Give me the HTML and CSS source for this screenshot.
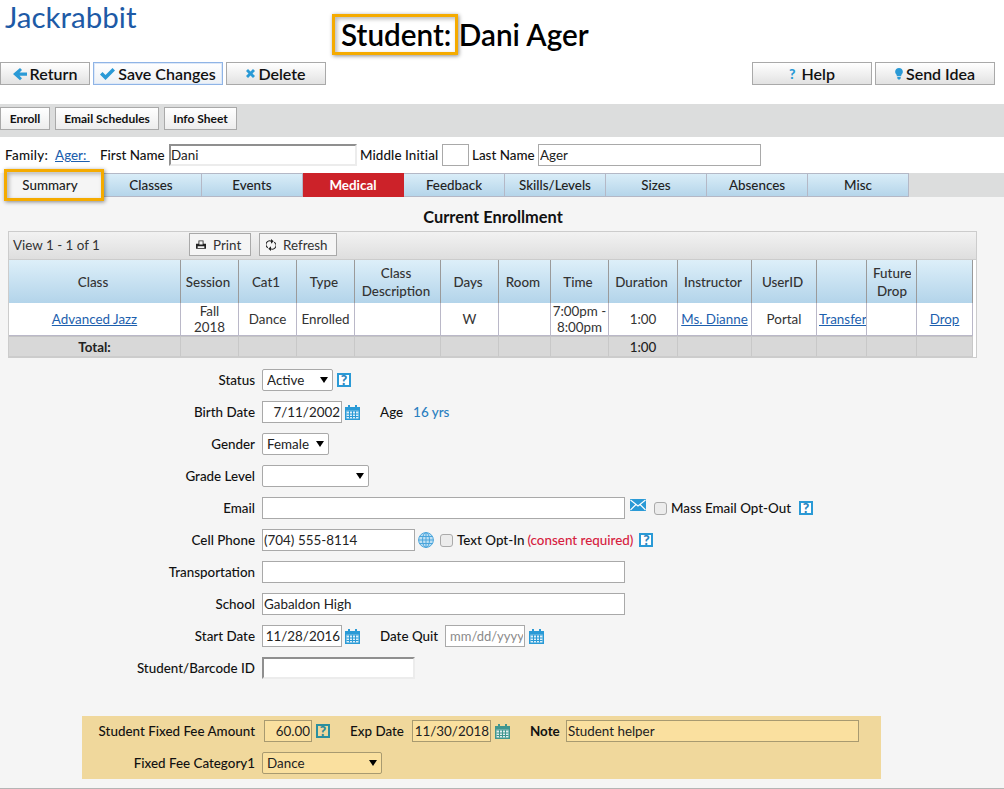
FILE: index.html
```html
<!DOCTYPE html>
<html lang="en">
<head>
<meta charset="utf-8">
<title>Student: Dani Ager</title>
<link rel="stylesheet" href="styles.css">
</head>
<body>
<svg class="defs" width="0" height="0" aria-hidden="true">
  <symbol id="cal" viewBox="0 0 15 15"><path fill="currentColor" d="M3 0h2v2h5V0h2v2h3v13H0V2h3z"/><path fill="#fff" opacity=".85" d="M1.5 5.5h12v8h-12z"/><path fill="currentColor" d="M1.5 5.500h12v1h-12zM1.500 8.500h12v1h-12zM1.500 11h12v1h-12zM4 5.500h1v8H4zM7 5.500h1v8H7zM10 5.500h1v8h-1z"/></symbol>
</svg>
<div class="page">
  <header class="top">
    <div class="logo">Jackrabbit</div>
    <h1 class="title">Student: Dani Ager</h1>
  </header>
  <div class="actions">
    <button class="btn"><svg class="ic" width="14" height="14" viewBox="0 0 14 14"><path fill="#2a9ad6" d="M7 1l2 2-2.500 2.500H14v3.200H6.500L9 11.200l-2 2L0 7.100z"/></svg>Return</button>
    <button class="btn btn-save"><svg class="ic" width="15" height="12" viewBox="0 0 15 12"><path fill="#2a9ad6" d="M0 6.500l2.500-2.500 3 3L12.500 0 15 2.500 5.500 12z"/></svg>Save Changes</button>
    <button class="btn btn-del"><svg class="ic ic-x" width="9" height="9" viewBox="0 0 9 9"><path fill="#2a9ad6" d="M2 0l2.500 2.500L7 0l2 2-2.500 2.500L9 7 7 9 4.500 6.500 2 9 0 7l2.500-2.500L0 2z"/></svg>Delete</button>
    <div class="actions-right">
      <button class="btn btn-wide"><span class="q">?</span>Help</button>
      <button class="btn btn-wide"><svg class="ic ic-bulb" width="8" height="12" viewBox="0 0 9 14"><path fill="#2a9ad6" d="M4.500 0C7 0 9 1.800 9 4.300c0 1.700-1 2.700-1.700 3.700L7 9.500H2L1.700 8C1 7 0 6 0 4.300 0 1.800 2 0 4.500 0zM2.500 10.500h4v1.500l-1 1.500h-2l-1-1.500z"/></svg>Send Idea</button>
    </div>
  </div>
  <div class="subbar">
    <button class="btn-sm b-enroll">Enroll</button>
    <button class="btn-sm b-email">Email Schedules</button>
    <button class="btn-sm b-info">Info Sheet</button>
  </div>
  <div class="names">
    <span class="lbl fam-l">Family:</span>
    <a class="link fam" href="#">Ager: </a>
    <span class="lbl first">First Name</span>
    <input class="inp inset w-first" type="text" value="Dani">
    <span class="lbl mid">Middle Initial</span>
    <input class="inp w-mi" type="text">
    <span class="lbl last">Last Name</span>
    <input class="inp w-last" type="text" value="Ager">
  </div>
  <nav class="tabs">
    <a class="tab tab-on">Summary</a>
    <a class="tab">Classes</a>
    <a class="tab">Events</a>
    <a class="tab tab-red">Medical</a>
    <a class="tab">Feedback</a>
    <a class="tab">Skills/Levels</a>
    <a class="tab">Sizes</a>
    <a class="tab">Absences</a>
    <a class="tab">Misc</a>
  </nav>
  <main class="main">
    <h2 class="heading">Current Enrollment</h2>
    <section class="grid">
      <div class="grid-tools">
        <span class="view">View 1 - 1 of 1</span>
        <button class="tool tool-print"><svg class="tool-ic" width="10" height="10" viewBox="0 0 12 11"><path fill="#222" d="M3 0h6v4h3v6H0V4h3zM4 1v4h4V1zM2 7v2h8V7z"/></svg>Print</button>
        <button class="tool tool-refresh"><svg class="tool-ic" width="10" height="12" viewBox="0 0 11 13" fill="none" stroke="#222" stroke-width="1.200"><path d="M2 9.500A4 4 0 0 1 6 2.500M9 3.500a4 4 0 0 1-4 7"/><path fill="#222" stroke="none" d="M5.500 0L8.500 2.500 5.500 5zM5.500 8L2.500 10.500 5.500 13z"/></svg>Refresh</button>
      </div>
      <table class="tbl">
        <colgroup>
          <col class="c1"><col class="c2"><col class="c2"><col class="c2"><col class="c5"><col class="c2"><col class="c7"><col class="c2"><col class="c9"><col class="c10"><col class="c11"><col class="c12"><col class="c12"><col class="c14">
        </colgroup>
        <thead>
          <tr>
            <th>Class</th><th>Session</th><th>Cat1</th><th>Type</th><th>Class Description</th><th>Days</th><th>Room</th><th>Time</th><th>Duration</th><th>Instructor</th><th>UserID</th><th></th><th><span class="clip">Future Drop</span></th><th></th>
          </tr>
        </thead>
        <tbody>
          <tr>
            <td><a class="link" href="#">Advanced Jazz</a></td><td class="td-session">Fall 2018</td><td>Dance</td><td>Enrolled</td><td></td><td>W</td><td></td><td>7:00pm - 8:00pm</td><td>1:00</td><td><a class="link" href="#">Ms. Dianne</a></td><td>Portal</td><td class="td-clip"><a class="link" href="#">Transfer</a></td><td></td><td><a class="link" href="#">Drop</a></td>
          </tr>
        </tbody>
        <tfoot>
          <tr>
            <td class="total">Total:</td><td></td><td></td><td></td><td></td><td></td><td></td><td></td><td>1:00</td><td></td><td></td><td></td><td></td><td></td>
          </tr>
        </tfoot>
      </table>
    </section>

    <form class="form">
      <div class="row"><label class="rl">Status</label><span class="sel w-status"><select><option>Active</option></select></span><span class="help ml4">?</span></div>
      <div class="row"><label class="rl">Birth Date</label><input class="inp date" type="text" value="7/11/2002"><svg class="cal" width="15" height="15"><use href="#cal"/></svg><span class="lbl gap-age">Age</span><span class="age">16 yrs</span></div>
      <div class="row"><label class="rl">Gender</label><span class="sel w-gender"><select><option>Female</option></select></span></div>
      <div class="row"><label class="rl">Grade Level</label><span class="sel w-grade"><select><option></option></select></span></div>
      <div class="row"><label class="rl">Email</label><input class="inp w-long" type="text">
        <svg class="mail" width="16" height="12" viewBox="0 0 16 12"><path fill="#2a9ad6" d="M0 0h16v12H0z"/><path fill="none" stroke="#fff" stroke-width="1.100" d="M0.500 1l7.500 6 7.500-6M0.500 11l5.500-5.500M15.500 11l-5.500-5.500"/></svg>
        <input class="chk chk-mail" type="checkbox"><span class="lbl chk-text">Mass Email Opt-Out</span><span class="help ml8">?</span></div>
      <div class="row"><label class="rl">Cell Phone</label><input class="inp w-mid" type="text" value="(704) 555-8114">
        <svg class="globe" width="16" height="16" viewBox="0 0 16 16" fill="none" stroke="#4aa5dc" stroke-width="1"><circle cx="8" cy="8" r="7.400" fill="#bfe0f3"/><ellipse cx="8" cy="8" rx="3.500" ry="7.400"/><path d="M8 .6v14.800M.6 8h14.800M1.700 4.500h12.600M1.700 11.500h12.600"/></svg>
        <input class="chk chk-sms" type="checkbox"><span class="lbl chk-text">Text Opt-In</span><span class="consent">(consent required)</span><span class="help ml6">?</span></div>
      <div class="row"><label class="rl">Transportation</label><input class="inp w-long" type="text"></div>
      <div class="row"><label class="rl">School</label><input class="inp w-long" type="text" value="Gabaldon High"></div>
      <div class="row"><label class="rl">Start Date</label><input class="inp date" type="text" value="11/28/2016"><svg class="cal" width="15" height="15"><use href="#cal"/></svg><span class="lbl gap-age quit-l">Date Quit</span><input class="inp date ph" type="text" placeholder="mm/dd/yyyy"><svg class="cal cal-quit" width="15" height="15"><use href="#cal"/></svg></div>
      <div class="row"><label class="rl">Student/Barcode ID</label><input class="inp inset w-mid" type="text"></div>
    </form>

    <section class="fee">
      <div class="row row-fee1"><label class="rl fee-l">Student Fixed Fee Amount</label><input class="inp fee-i fee-amt" type="text" value="60.00"><span class="help ml4 help-fee">?</span><span class="lbl fee-exp">Exp Date</span><input class="inp fee-i date fee-date" type="text" value="11/30/2018"><svg class="cal cal-fee" width="15" height="15"><use href="#cal"/></svg><span class="lbl fee-note">Note</span><input class="inp fee-i fee-text" type="text" value="Student helper"></div>
      <div class="row"><label class="rl fee-l fee-l2">Fixed Fee Category1</label><span class="sel sel-fee w-cat"><select><option>Dance</option></select></span></div>
    </section>
  </main>
  <div class="mark mark-title"></div>
  <div class="mark mark-tab"></div>
</div>
</body>
</html>
```
FILE: styles.css
```css
* { box-sizing: border-box; }
html, body { margin: 0; padding: 0; }
body { font-family: Lato, "Open Sans", sans-serif; font-size: 13.400px; color: #111; background: #fff; overflow: hidden; }
.defs { position: absolute; }
.page { position: relative; width: 1004px; height: 789px; overflow: hidden; }

.top { display: flex; height: 62px; }
.logo { width: 341px; height: 34px; padding: 1px 0 0 5px; font-size: 29.500px; line-height: 32px; font-weight: 400; color: #1d5aa6; }
.title { margin: 17px 0 0; font-size: 29.700px; line-height: 36px; font-weight: 600; color: #000; }

.actions { display: flex; gap: 3px; height: 23px; }
.actions-right { display: flex; gap: 3px; margin-left: auto; padding-right: 9px; }
.btn { display: flex; align-items: center; justify-content: center; width: 90px; height: 23px; padding: 0; border: 1px solid #a9a9a9; background: linear-gradient(#fff, #e2e2e2); font: 600 16px/21px Lato, sans-serif; color: #111; }
.btn-save { width: 130px; border-color: #8fb4e6; background: linear-gradient(#fff, #ecf0f5); box-shadow: inset 0 0 0 1px #dce8f8; }
.btn-del { width: 100px; }
.btn-wide { width: 120px; }
.ic { margin-right: 3px; }
.ic-x { margin-right: 3px; }
.ic-bulb { margin-right: 3px; }
.q { margin-right: 6px; color: #2a9ad6; font-weight: 900; font-size: 14px; }

.subbar { display: flex; gap: 5px; height: 33px; margin-top: 19px; padding-top: 3px; background: #dcdddd; }
.btn-sm { height: 23px; padding: 0; border: 1px solid #a9a9a9; background: linear-gradient(#fff, #ededed); font: 700 12px/20px Lato, sans-serif; color: #111; }
.b-enroll { width: 50px; }
.b-email { width: 104px; }
.b-info { width: 73px; }

.names { display: flex; align-items: center; height: 36px; padding: 0 0 0 5px; }
.lbl { font-weight: 500; white-space: nowrap; color: #111; }
.link { color: #1d5fae; text-decoration: underline; }
.fam-l { width: 44px; letter-spacing: .3px; }
.fam { width: 33px; margin-left: 6px; font-weight: 500; white-space: pre; }
.first { width: 65px; margin-left: 12px; margin-right: 4px; }
.mid { width: 79px; margin-left: 3px; margin-right: 3px; letter-spacing: .1px; }
.last { width: 62px; margin-left: 3px; margin-right: 4px; }

.inp { height: 22px; padding: 0 1px; border: 1px solid #a9a9a9; background: #fff; font: 400 13.400px/20px Lato, sans-serif; color: #222; outline: 0; border-radius: 0; }
.inset { border-style: solid; border-width: 2px; border-color: #8f8f8f #ececec #ececec #8f8f8f; padding: 0; }
.w-first { width: 188px; }
.w-mi { width: 27px; }
.w-last { width: 223px; }
.w-long { width: 363px; }
.w-mid { width: 153px; }

.tabs { display: flex; height: 24px; background: #dcdddd; }
.tab { width: 101px; height: 24px; border: 1px solid #b4b8c6; border-left: 0; background: linear-gradient(#d9edf8, #b5d5ea); text-align: center; font-weight: 500; line-height: 22px; color: #222; }
.tab-on { background: #f5f5f5; border-color: #f5f5f5; }
.tab-red { background: #cc2229; color: #fff; font-weight: 700; border-color: #cc2229; }

.main { height: 592px; background: #f5f5f5; border-bottom: 1px solid #b5b5b5; }
.heading { margin: 0; height: 34px; padding-right: 18px; text-align: center; font-size: 16.400px; line-height: 40px; font-weight: 700; color: #111; }

.grid { width: 969px; margin-left: 8px; border: 1px solid #ccc; background: #fff; height: 127px; }
.grid-tools { display: flex; align-items: center; height: 28px; padding: 0 0 2px 4px; border-bottom: 1px solid #ccc; background: linear-gradient(#f2f2f2, #dedede); }
.view { width: 176px; color: #333; }
.tool { display: flex; align-items: center; height: 23px; padding: 0; border: 1px solid #a9a9a9; background: #f5f5f5; font: 400 13.400px/20px Lato, sans-serif; color: #333; }
.tool-print { width: 62px; padding-left: 6px; margin-right: 8px; }
.tool-refresh { width: 78px; padding-left: 6px; }
.tool-ic { margin-right: 7px; }

.tbl { table-layout: fixed; width: 964px; border-collapse: separate; border-spacing: 0; }
.c1 { width: 172px; }
.c2 { width: 58px; }
.c5 { width: 86px; }
.c7 { width: 52px; }
.c9 { width: 69px; }
.c10 { width: 74px; }
.c11 { width: 65px; }
.c12 { width: 50px; }
.c14 { width: 56px; }
.tbl th, .tbl td { padding: 0 1px; text-align: center; overflow: hidden; }
.tbl th { height: 43px; padding: 0 3px 0 0; background: linear-gradient(#ddeff9, #b3d4ea); border-right: 1px solid #9a9a9a; font-weight: 500; line-height: 18px; color: #333; }
.tbl tbody td { height: 33px; background: #fff; border-right: 1px solid #bab8c8; border-bottom: 1px solid #bab8c8; line-height: 16px; color: #333; }
.tbl tbody td.td-session { padding: 0 8px; }
.tbl tfoot td { height: 21px; background: #d8d8d8; border-top: 1px solid #c4c4c4; border-right: 1px solid #c8c8c8; font-weight: 500; color: #222; border-bottom: 1px solid #ccc; }
.tbl tfoot td.total { font-weight: 700; }
.clip { display: block; width: 38px; margin-left: 6px; overflow: hidden; }
.tbl tbody td.td-clip { white-space: nowrap; text-align: left; padding: 0 0 0 2px; }

.form { margin-top: 6px; }
.row { display: flex; align-items: center; height: 32px; }
.rl { width: 255px; margin-right: 7px; text-align: right; font-weight: 500; color: #111; white-space: nowrap; }

.sel { position: relative; display: block; height: 22px; }
.sel select { appearance: none; display: block; width: 100%; height: 22px; padding: 0 0 0 4px; border: 1px solid #a9a9a9; border-radius: 2px; background: #fff; font: 400 13.400px/20px Lato, sans-serif; color: #222; }
.sel::after { content: ""; position: absolute; right: 5px; top: 8px; border: 4px solid transparent; border-top: 6px solid #000; border-bottom: 0; }
.w-status { width: 71px; }
.w-gender { width: 67px; }
.w-grade { width: 107px; }
.w-cat { width: 120px; }

.help { display: block; width: 14px; height: 14px; border: 2px solid #2a9ad6; background: #fff; text-align: center; font-weight: 900; font-size: 14px; line-height: 10px; color: #2a86bf; }
.ml4 { margin-left: 4px; }
.ml6 { margin-left: 6px; }
.ml8 { margin-left: 8px; }

.date { width: 80px; text-align: right; }
.ph { text-align: left; padding-left: 4px; font-size: 13px; }
.ph::placeholder { color: #8a8a8a; opacity: 1; }
.cal { margin-left: 3px; color: #2a9ad6; }
.cal-quit { margin-left: 4px; }
.gap-age { margin-left: 20px; }
.age { margin-left: 10px; font-weight: 500; color: #2a7fc0; }
.quit-l { width: 65px; }
.mail { margin-left: 5px; margin-top: -6px; }
.globe { margin-left: 3px; }
.chk { appearance: none; width: 13px; height: 13px; margin: 0; border: 1px solid #aaa; border-radius: 3px; background: #ececec; }
.chk-mail { margin-left: 8px; }
.chk-sms { margin-left: 6px; }
.chk-text { margin-left: 4px; }
.consent { margin-left: 3px; font-weight: 500; color: #d6203e; }

.fee { width: 799px; height: 63px; margin: 32px 0 0 82px; background: #f0d89c; }
.row-fee1 { height: 30px; margin-bottom: 1px; }
.fee-l { width: 173px; margin-right: 9px; }
.fee-l2 { margin-right: 7px; }
.fee-i { background: #fae09f; border-color: #a89a70; }
.fee-amt { width: 48px; text-align: right; }
.help-fee { background: #f0d89c; color: #2a8a9a; border-color: #2a8f9f; }
.fee-exp { width: 62px; margin-left: 20px; }
.fee-date { width: 79px; }
.cal-fee { margin-left: 4px; color: #3f968f; }
.fee-note { width: 36px; margin-left: 20px; font-weight: 700; }
.fee-text { width: 293px; }
.sel-fee select { background: #fae09f; border-color: #a89a70; }

.mark { position: absolute; border: 3px solid #f5ab00; box-shadow: 1px 1px 4px rgba(0,0,0,.45), inset 2px 2px 4px rgba(0,0,0,.28); pointer-events: none; }
.mark-title { left: 332px; top: 14px; width: 126px; height: 41px; }
.mark-tab { left: 4px; top: 169px; width: 100px; height: 32px; }
```
